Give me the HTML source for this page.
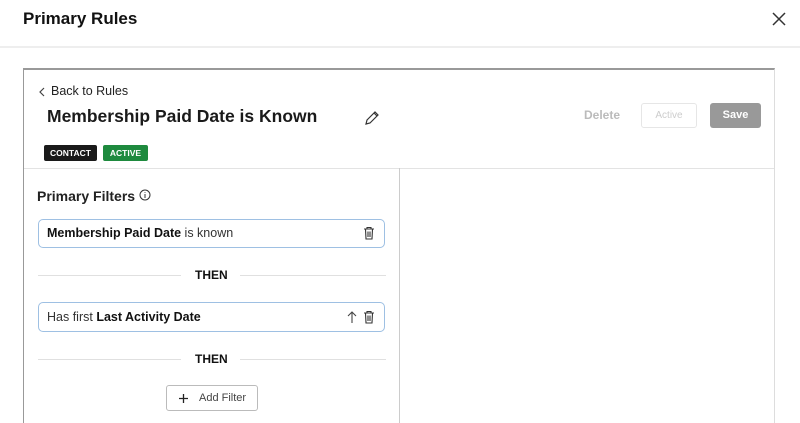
<!DOCTYPE html>
<html style="width:800px;height:423px;overflow:hidden"><head><style>
*{box-sizing:border-box;margin:0;padding:0}
body{width:800px;height:423px;overflow:hidden;background:#fff;font-family:"Liberation Sans",sans-serif;color:#111;position:relative}
.a{position:absolute}
</style></head><body>
<div class="a" style="left:23px;top:9px;font-size:17px;font-weight:bold;">Primary Rules</div>
<svg class="a" style="left:772px;top:12px" width="14" height="14"><path d="M1 1L13 13M13 1L1 13" stroke="#333" stroke-width="1.5"/></svg>
<div class="a" style="left:0;top:46px;width:800px;height:2px;background:#eee"></div>
<div class="a" style="left:23px;top:68px;width:752px;height:355px;border:1px solid #ddd;border-bottom:none;border-top:2px solid #999;border-left:1px solid #999"></div>
<svg class="a" style="left:38px;top:87px" width="8" height="10"><path d="M6 1L2 5L6 9" stroke="#444" fill="none" stroke-width="1.2"/></svg>
<div class="a" style="left:51px;top:84px;font-size:12.5px;color:#222">Back to Rules</div>
<div class="a" style="left:47px;top:106px;font-size:17.5px;font-weight:bold;color:#1a1a1a">Membership Paid Date is Known</div>
<svg class="a" style="left:364px;top:110px" width="16" height="16"><path d="M2 14L3 10L11 2L14 5L6 13Z M10 3L13 6" stroke="#333" fill="none" stroke-width="1.2"/></svg>
<div class="a" style="left:44px;top:145px;width:53px;height:16px;background:#1a1a1a;color:#fff;font-size:8.5px;font-weight:bold;text-align:center;line-height:16px;border-radius:2px">CONTACT</div>
<div class="a" style="left:103px;top:145px;width:45px;height:16px;background:#1e8a3e;color:#fff;font-size:8.5px;font-weight:bold;text-align:center;line-height:16px;border-radius:2px">ACTIVE</div>
<div class="a" style="left:584px;top:108px;font-size:12px;font-weight:bold;color:#bbb">Delete</div>
<div class="a" style="left:641px;top:103px;width:56px;height:25px;border:1px solid #e6e6e6;border-radius:3px;color:#ccc;font-size:10px;text-align:center;line-height:23px">Active</div>
<div class="a" style="left:710px;top:103px;width:51px;height:25px;background:#999;border-radius:3px;color:#fff;font-size:11px;font-weight:bold;text-align:center;line-height:25px">Save</div>
<div class="a" style="left:24px;top:168px;width:750px;height:1px;background:#e3e3e3"></div>
<div class="a" style="left:399px;top:168px;width:1px;height:255px;background:#ccc"></div>
<div class="a" style="left:37px;top:188px;font-size:14px;font-weight:bold;color:#222">Primary Filters</div>
<svg class="a" style="left:139px;top:189px" width="12" height="12"><circle cx="6" cy="6" r="5" stroke="#333" fill="none"/><path d="M6 5V9M6 3V3.8" stroke="#333"/></svg>
<div class="a" style="left:38px;top:219px;width:347px;height:29px;border:1px solid #9ec0e3;border-radius:5px;font-size:12.5px;line-height:27px;padding-left:8px;color:#333"><b style="color:#111">Membership Paid Date</b> is known</div>
<svg class="a" style="left:363px;top:226px" width="12" height="14"><path d="M1 3H11M4 3V1.5H8V3M2.5 3L3 13H9L9.5 3M5 5.5V11M7 5.5V11" stroke="#333" fill="none" stroke-width="1.1"/></svg>
<div class="a" style="left:38px;top:275px;width:143px;height:1px;background:#e0e0e0"></div>
<div class="a" style="left:240px;top:275px;width:146px;height:1px;background:#e0e0e0"></div>
<div class="a" style="left:195px;top:268px;font-size:12px;font-weight:bold">THEN</div>
<div class="a" style="left:38px;top:302px;width:347px;height:30px;border:1px solid #9ec0e3;border-radius:5px;font-size:12.5px;line-height:28px;padding-left:8px;color:#333">Has first <b style="color:#111">Last Activity Date</b></div>
<svg class="a" style="left:347px;top:310px" width="10" height="14"><path d="M5 13V2M1 6L5 2L9 6" stroke="#444" fill="none" stroke-width="1.1"/></svg>
<svg class="a" style="left:363px;top:310px" width="12" height="14"><path d="M1 3H11M4 3V1.5H8V3M2.5 3L3 13H9L9.5 3M5 5.5V11M7 5.5V11" stroke="#333" fill="none" stroke-width="1.1"/></svg>
<div class="a" style="left:38px;top:359px;width:143px;height:1px;background:#e0e0e0"></div>
<div class="a" style="left:240px;top:359px;width:146px;height:1px;background:#e0e0e0"></div>
<div class="a" style="left:195px;top:352px;font-size:12px;font-weight:bold">THEN</div>
<div class="a" style="left:166px;top:385px;width:92px;height:26px;border:1px solid #bbb;border-radius:3px;font-size:11px;line-height:24px;color:#444;padding-left:32px">Add Filter</div>
<svg class="a" style="left:179px;top:394px" width="9" height="9"><path d="M4.5 0V9M0 4.5H9" stroke="#222" stroke-width="1.3"/></svg>
</body></html>
